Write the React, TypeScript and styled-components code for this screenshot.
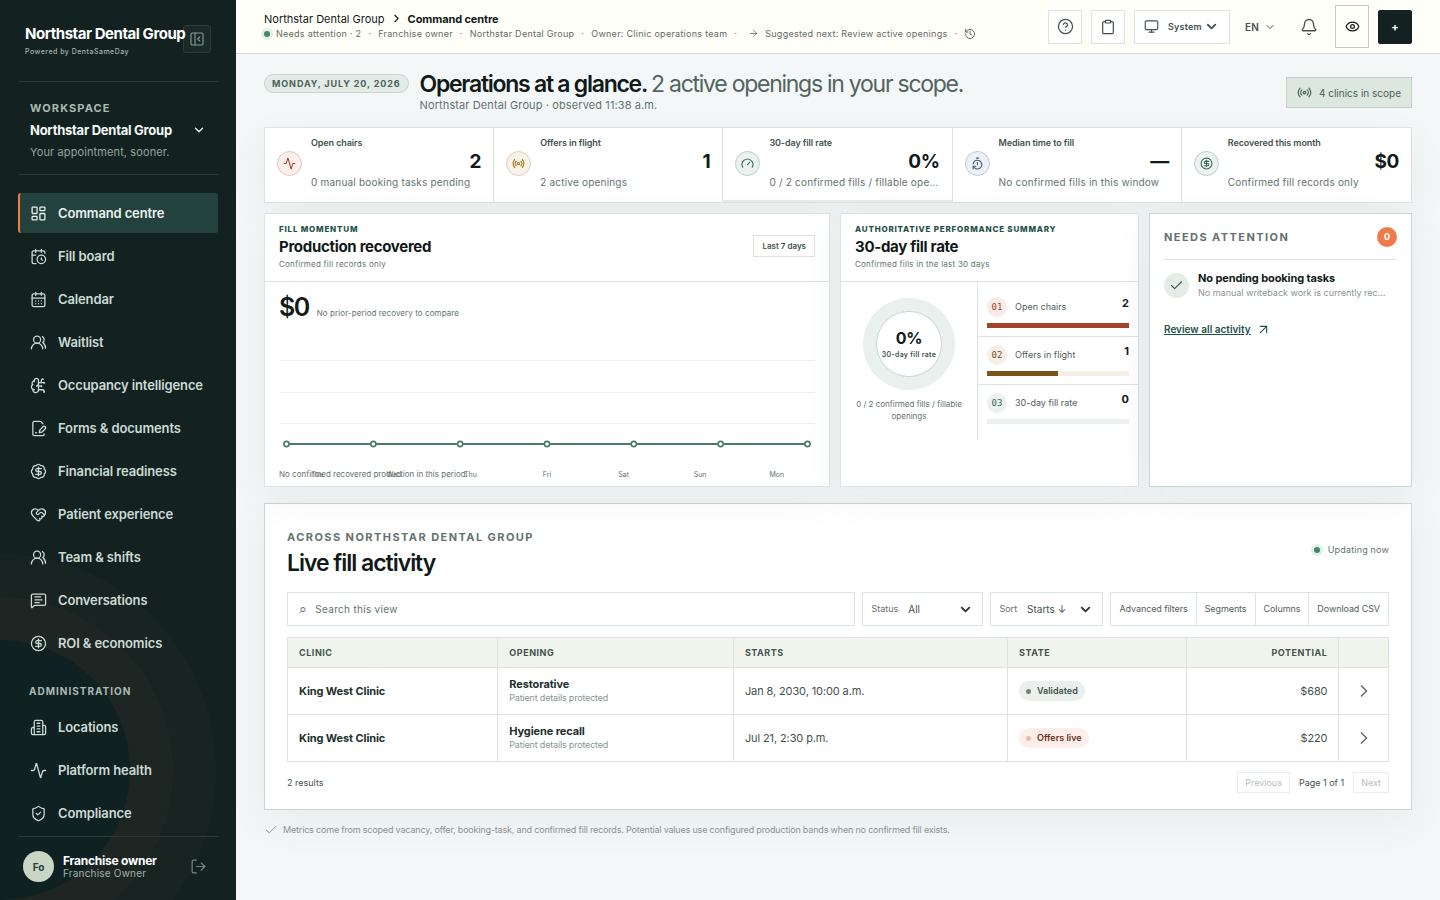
import React from 'react';
import styled, { createGlobalStyle, css } from 'styled-components';
import {
  Activity, ArrowRight, ArrowUpRight, BadgeDollarSign, Bell, BrainCircuit, CalendarClock,
  CalendarDays, Check, ChevronDown, ChevronRight, CircleDollarSign, CircleQuestionMark, Clipboard,
  Eye, FilePenLine, Gauge, HeartHandshake, History, LayoutDashboard, LogOut, MessageSquareText,
  Monitor, PanelLeftClose, Radio, ShieldCheck, TimerReset, UsersRound,
} from 'lucide-react';

const c = {
  ink: '#111a18',
  body: '#43524d',
  muted: '#65726e',
  faint: '#8a9491',
  green: '#24504a',
  line: '#dce3e1',
  lineStrong: '#cbd5d2',
  side: '#132221',
};

const GlobalStyle = createGlobalStyle`
  *, *::before, *::after { box-sizing: border-box; }
  body {
    margin: 0;
    font-family: Inter, "Liberation Sans", sans-serif;
    font-size: 11px;
    line-height: 16px;
    color: ${c.ink};
    background: #f3f7f8;
  }
  h1, h2, p, dl, dd, ul { margin: 0; padding: 0; }
  ul { list-style: none; }
  button, select, input { font: inherit; color: inherit; letter-spacing: inherit; margin: 0; }
  button { cursor: pointer; padding: 0; background: none; border: 0; }
  a { color: inherit; text-decoration: none; }
  svg { display: block; flex: none; }
`;

const Shell = styled.div`
  display: grid;
  grid-template-columns: 236px minmax(0, 1fr);
  min-height: 100vh;
`;

/* ---------- Sidebar ---------- */

const Sidebar = styled.aside`
  position: sticky;
  top: 0;
  height: 100vh;
  padding: 0 18px;
  display: flex;
  flex-direction: column;
  overflow: hidden;
  background: ${c.side};
  color: #cbdad4;
  isolation: isolate;

  &::before {
    content: '';
    position: absolute;
    z-index: -1;
    left: -130px;
    bottom: 0;
    width: 260px;
    height: 260px;
    border-radius: 50%;
    background: #102122;
    box-shadow: 0 0 0 43px rgba(200, 120, 100, 0.03), 0 0 0 86px rgba(200, 120, 100, 0.03);
  }
`;

const Brand = styled.div`
  display: flex;
  justify-content: space-between;
  height: 82px;
  padding: 25px 7px 0;
  border-bottom: 1px solid #2a3937;
`;

const BrandText = styled.div`
  position: relative;
  z-index: 1;
  min-width: 0;
  width: 158px;
  flex: none;
  white-space: nowrap;
`;

const BrandName = styled.div`
  font-size: 15px;
  line-height: 18px;
  font-weight: 700;
  letter-spacing: -0.03em;
  color: #fff;
`;

const BrandBy = styled.div`
  font-size: 7px;
  line-height: 18px;
  letter-spacing: 0.07em;
  font-weight: 500;
  color: #a3b2ad;
`;

const CollapseButton = styled.button`
  width: 28px;
  height: 28px;
  display: grid;
  place-items: center;
  border: 1px solid #2a3a37;
  border-radius: 3px;
  background: #1a2a28;
  color: #85968f;
`;

const Workspace = styled.button`
  display: grid;
  grid-template-columns: 1fr 14px;
  text-align: left;
  padding: 18px 12px 14px;
  border-bottom: 1px solid #2a3937;
`;

const WorkspaceLabel = styled.span`
  grid-column: 1 / -1;
  font-size: 11px;
  line-height: 16px;
  font-weight: 700;
  letter-spacing: 0.1em;
  color: #a9bab4;
`;

const WorkspaceName = styled.strong`
  font-size: 13px;
  line-height: 28px;
  font-weight: 700;
  letter-spacing: -0.02em;
  color: #f4f8f6;
`;

const WorkspaceNote = styled.span`
  grid-column: 1 / -1;
  font-size: 11px;
  line-height: 16px;
  letter-spacing: 0.01em;
  color: #93a49e;
`;

const Caret = styled.span`
  display: grid;
  place-items: center;
  color: #e6eeeb;
`;

const Nav = styled.nav`
  flex: 1;
  min-height: 0;
  overflow: hidden;
  padding-top: 18px;
  display: flex;
  flex-direction: column;
  gap: 3px;
`;

const NavItem = styled.a<{ $active?: boolean }>`
  flex: none;
  display: flex;
  align-items: center;
  gap: 11px;
  height: 40px;
  padding-left: 10px;
  border-left: 2px solid transparent;
  border-radius: 3px;
  font-size: 13px;
  font-weight: 600;
  letter-spacing: -0.01em;
  ${(p) => p.$active && css`
    background: #24423d;
    border-left-color: #ef7d4a;
    color: #e8f1ee;
  `}
`;

const NavHeading = styled.div`
  padding: 17px 11px 5px;
  font-size: 10px;
  line-height: 16px;
  font-weight: 700;
  letter-spacing: 0.1em;
  color: #a9bab4;
`;

const Account = styled.div`
  display: flex;
  align-items: center;
  gap: 9px;
  height: 64px;
  padding: 0 10px 4px 5px;
  border-top: 1px solid #2a3937;
`;

const Avatar = styled.span`
  width: 31px;
  height: 31px;
  border-radius: 50%;
  display: grid;
  place-items: center;
  background: #c9d6c5;
  color: #24423d;
  font-size: 10px;
  font-weight: 700;
`;

const AccountText = styled.div`
  flex: 1;
  font-size: 10px;
  line-height: 13px;
  letter-spacing: 0.02em;
  color: #a3b2ad;
  strong { display: block; font-size: 12px; letter-spacing: -0.02em; font-weight: 700; color: #fff; }
`;

const SignOut = styled.button`
  width: 20px;
  height: 20px;
  display: grid;
  place-items: center;
  color: #73847e;
`;

/* ---------- Top bar ---------- */

const Page = styled.div`
  min-width: 0;
`;

const TopBar = styled.header`
  display: flex;
  justify-content: space-between;
  align-items: center;
  height: 54px;
  padding: 0 28px;
  background: #fffef9;
  border-bottom: 1px solid #d5dcda;
`;

const Crumbs = styled.nav`
  display: flex;
  align-items: center;
  gap: 5px;
  font-size: 11px;
  line-height: 14px;
  strong { font-weight: 700; letter-spacing: -0.01em; }
`;

const Context = styled.div`
  display: flex;
  align-items: center;
  gap: 7px;
  font-size: 9px;
  line-height: 16px;
  letter-spacing: 0.03em;
  color: #5f6c68;
`;

const ContextItem = styled.span<{ $inset?: boolean }>`
  display: flex;
  align-items: center;
  gap: 6px;
  padding-left: ${(p) => (p.$inset ? 4 : 0)}px;
`;

const Dot = styled.i<{ $size: number; $color: string; $halo?: string }>`
  flex: none;
  width: ${(p) => p.$size}px;
  height: ${(p) => p.$size}px;
  border-radius: 50%;
  background: ${(p) => p.$color};
  ${(p) => p.$halo && `box-shadow: 0 0 0 3px ${p.$halo};`}
`;

const Tools = styled.div`
  display: flex;
  align-items: center;
  gap: 9px;
`;

const ToolButton = styled.button<{ $kind?: 'plain' | 'tall' | 'dark' }>`
  width: 34px;
  height: 34px;
  display: grid;
  place-items: center;
  border: 1px solid ${c.line};
  background: #fff;
  color: ${c.body};
  font-size: 11px;
  font-weight: 700;
  ${(p) => p.$kind === 'plain' && 'border-color: transparent; background: none;'}
  ${(p) => p.$kind === 'tall' && `height: 43px; border-color: #c3c9c7; background: none; color: ${c.ink};`}
  ${(p) => p.$kind === 'dark' && `border-color: ${c.side}; border-radius: 2px; background: ${c.side}; color: #fff;`}
`;

const ThemeField = styled.label`
  display: flex;
  align-items: center;
  gap: 9px;
  width: 96px;
  height: 34px;
  padding: 0 10px 0 9px;
  border: 1px solid ${c.line};
  background: #fff;
  font-size: 9px;
  font-weight: 600;
  letter-spacing: 0.02em;
  color: ${c.body};
`;

const LanguageField = styled(ThemeField)`
  width: 44px;
  padding: 0 6px 0 5px;
  border-color: transparent;
  background: none;
  font-size: 10px;
`;

const SelectWrap = styled.span`
  flex: 1;
  min-width: 0;
  display: grid;
  grid-template-columns: minmax(0, 1fr) auto;
  align-items: center;
  > * { grid-row: 1; }
  > svg { grid-column: 2; pointer-events: none; }
`;

const BareSelect = styled.select`
  grid-column: 1 / -1;
  width: 100%;
  appearance: none;
  border: 0;
  padding: 0;
  background: transparent;
`;

/* ---------- Hero ---------- */

const Content = styled.main`
  padding: 17px 28px 28px;
`;

const Hero = styled.div`
  display: flex;
  align-items: flex-start;
  gap: 11px;
  height: 56px;
`;

const DatePill = styled.span`
  margin-top: 3px;
  height: 19px;
  padding: 0 7px;
  border: 1px solid #c8d5cf;
  border-radius: 10px;
  background: #e2ebe6;
  color: #4c6159;
  font-size: 9px;
  line-height: 17px;
  font-weight: 700;
  letter-spacing: 0.1em;
  white-space: nowrap;
`;

const HeroText = styled.div`
  flex: 1;
  min-width: 0;
  letter-spacing: 0.01em;
  color: ${c.muted};
`;

const Title = styled.h1`
  font-size: 23px;
  line-height: 26px;
  font-weight: 600;
  letter-spacing: -0.055em;
  color: ${c.ink};
  span { font-weight: 400; color: #52645e; }
`;

const ScopeBadge = styled.span`
  margin-top: 6px;
  display: flex;
  align-items: center;
  gap: 7px;
  height: 31px;
  padding: 0 10px;
  border: 1px solid #c3d1c9;
  background: #dce7df;
  color: #4c6159;
  font-size: 10px;
`;

/* ---------- KPI strip ---------- */

const cardShadow = '0 12px 40px rgba(24, 48, 42, 0.05)';

const Metrics = styled.section`
  display: grid;
  grid-template-columns: repeat(5, minmax(0, 1fr));
  height: 76px;
  border: 1px solid ${c.line};
  background: #fff;
  box-shadow: ${cardShadow};
`;

const Metric = styled.article<{ $marked?: boolean }>`
  display: grid;
  grid-template-columns: 25px minmax(0, 1fr);
  column-gap: 9px;
  align-items: center;
  padding: 6px 12px 9px;
  &:not(:last-child) { border-right: 1px solid ${c.line}; }
  ${(p) => p.$marked && 'box-shadow: inset 0 -2px #e6ebea;'}
`;

const MetricIcon = styled.span<{ $tint: string; $ring: string; $color: string }>`
  margin-top: 17px;
  align-self: start;
  width: 25px;
  height: 25px;
  display: grid;
  place-items: center;
  border-radius: 50%;
  border: 1px solid ${(p) => p.$ring};
  background: ${(p) => p.$tint};
  color: ${(p) => p.$color};
`;

const MetricBody = styled.div`
  display: flex;
  flex-direction: column;
  align-self: start;
`;

const MetricLabel = styled.span`
  font-size: 9px;
  line-height: 18px;
  font-weight: 600;
  letter-spacing: -0.01em;
  color: ${c.body};
`;

const MetricValue = styled.strong`
  align-self: flex-end;
  font-size: 19px;
  line-height: 20px;
  font-weight: 700;
  letter-spacing: -0.02em;
  color: ${c.ink};
`;

const MetricNote = styled.span`
  font-size: 10px;
  line-height: 20px;
  letter-spacing: 0.02em;
  color: ${c.muted};
  white-space: nowrap;
  overflow: hidden;
  text-overflow: ellipsis;
`;

/* ---------- Panels ---------- */

const Panels = styled.div`
  display: grid;
  grid-template-columns: 566fr 299fr 263fr;
  gap: 10px;
  margin: 10px 0 16px;
`;

const Panel = styled.section<{ $strong?: boolean }>`
  min-width: 0;
  min-height: 274px;
  background: #fff;
  border: 1px solid ${(p) => (p.$strong ? c.lineStrong : c.line)};
  box-shadow: ${cardShadow};
`;

const PanelHead = styled.header`
  display: flex;
  justify-content: space-between;
  align-items: center;
  height: 68px;
  padding: 0 14px 3px;
  border-bottom: 1px solid ${c.line};
`;

const PanelEyebrow = styled.p`
  font-size: 8px;
  line-height: 16px;
  font-weight: 800;
  letter-spacing: 0.1em;
  color: ${c.green};
`;

const PanelTitle = styled.h2`
  font-size: 15px;
  line-height: 20px;
  font-weight: 700;
  letter-spacing: -0.02em;
`;

const SmallNote = styled.p`
  font-size: 8px;
  line-height: 14px;
  letter-spacing: 0.03em;
  color: ${c.muted};
`;

const RangeTag = styled.span`
  height: 22px;
  padding: 0 8px;
  border: 1px solid ${c.line};
  font-size: 8px;
  line-height: 20px;
  font-weight: 600;
  color: ${c.body};
`;

const TrendBody = styled.div`
  position: relative;
  padding: 10px 14px 0;
`;

const TrendTotal = styled.div`
  display: flex;
  align-items: baseline;
  gap: 8px;
  strong { font-size: 25px; line-height: 30px; font-weight: 600; letter-spacing: -0.06em; }
  p { letter-spacing: 0.01em; }
`;

const Chart = styled.svg`
  width: 100%;
  height: 141px;
  margin-top: 6px;
`;

const Days = styled.div`
  display: grid;
  grid-template-columns: repeat(7, 1fr);
  text-align: center;
  font-size: 7px;
  line-height: 12px;
  color: ${c.muted};
`;

const EmptyNote = styled(SmallNote)`
  position: absolute;
  left: 14px;
  bottom: 0;
  letter-spacing: 0;
`;

const RateBody = styled.div`
  display: grid;
  grid-template-columns: 137px minmax(0, 1fr);
  min-height: 158px;
`;

const Donut = styled.div`
  display: flex;
  flex-direction: column;
  align-items: center;
  gap: 8px;
  padding: 16px 14px 0;
  border-right: 1px solid ${c.line};
  text-align: center;
  font-size: 8px;
  line-height: 12px;
  color: ${c.muted};
`;

const Ring = styled.div`
  width: 92px;
  height: 92px;
  padding: 13px;
  border-radius: 50%;
  background: #e9f0ed;
`;

const RingCore = styled.div`
  height: 66px;
  display: flex;
  flex-direction: column;
  align-items: center;
  justify-content: center;
  padding-top: 2px;
  border: 1px solid ${c.lineStrong};
  border-radius: 50%;
  background: #fff;
  white-space: nowrap;
  font-size: 7px;
  line-height: 14px;
  letter-spacing: 0.04em;
  font-weight: 600;
  color: ${c.body};
  strong { font-size: 16px; line-height: 20px; letter-spacing: -0.02em; font-weight: 700; color: ${c.ink}; }
`;

const Ranks = styled.ul`
  padding-top: 6px;
`;

const Rank = styled.li`
  display: grid;
  grid-template-columns: 20px 1fr auto;
  align-content: start;
  align-items: center;
  column-gap: 8px;
  height: 48px;
  padding: 9px 9px 0;
  font-size: 9px;
  color: #52605c;
  & + & { border-top: 1px solid ${c.line}; padding-top: 8px; }
  strong { align-self: start; font-size: 11px; line-height: 13px; font-weight: 700; color: ${c.ink}; }
`;

const RankNumber = styled.span<{ $tint: string; $color: string }>`
  width: 20px;
  height: 20px;
  border-radius: 50%;
  background: ${(p) => p.$tint};
  color: ${(p) => p.$color};
  text-align: center;
  font: 9px/20px "DejaVu Sans Mono", monospace;
`;

const Bar = styled.div<{ $tint: string }>`
  grid-column: 1 / -1;
  height: 5px;
  margin-top: 6px;
  background: ${(p) => p.$tint};
`;

const BarFill = styled.div<{ $color: string }>`
  height: 100%;
  background: ${(p) => p.$color};
`;

const AttentionPanel = styled(Panel)`
  padding: 0 14px;
`;

const AttentionHead = styled.header`
  display: flex;
  justify-content: space-between;
  align-items: center;
  height: 46px;
  border-bottom: 1px solid ${c.line};
`;

const Kicker = styled.p`
  font-size: 11px;
  line-height: 18px;
  font-weight: 700;
  letter-spacing: 0.13em;
  color: ${c.muted};
`;

const Count = styled.span`
  width: 20px;
  height: 20px;
  border-radius: 50%;
  background: #ee7c4b;
  color: #fff;
  text-align: center;
  font-size: 9px;
  line-height: 20px;
  font-weight: 700;
`;

const Task = styled.div`
  display: grid;
  grid-template-columns: 25px minmax(0, 1fr);
  gap: 9px;
  align-items: center;
  margin: 10px 0 21px;
`;

const TaskIcon = styled.span`
  width: 25px;
  height: 25px;
  display: grid;
  place-items: center;
  border-radius: 50%;
  background: #e4ece7;
  color: #46594f;
`;

const TaskText = styled.div`
  font-size: 9px;
  line-height: 14px;
  color: ${c.faint};
  strong { display: block; font-size: 11px; line-height: 16px; letter-spacing: -0.01em; font-weight: 700; color: ${c.ink}; }
  span { display: block; white-space: nowrap; overflow: hidden; text-overflow: ellipsis; padding-right: 10px; }
`;

const TextLink = styled.a`
  display: inline-flex;
  align-items: center;
  gap: 5px;
  font-size: 10px;
  line-height: 14px;
  font-weight: 600;
  color: ${c.green};
  span { text-decoration: underline; text-underline-offset: 1px; }
`;

/* ---------- Activity ---------- */

const ActivityPanel = styled(Panel)`
  padding: 24px 22px 16px;
`;

const ActivityHead = styled.header`
  display: flex;
  align-items: center;
  justify-content: space-between;
  margin-bottom: 12px;
`;

const ActivityTitle = styled.h2`
  font-size: 23px;
  line-height: 34px;
  font-weight: 600;
  letter-spacing: -0.045em;
`;

const Updating = styled.span`
  display: flex;
  align-items: center;
  gap: 8px;
  padding-bottom: 8px;
  font-size: 9px;
  letter-spacing: 0.02em;
  color: ${c.muted};
`;

const Toolbar = styled.div`
  display: flex;
  gap: 7px;
  height: 34px;
  margin-bottom: 11px;
`;

const SearchField = styled.label`
  flex: 1;
  display: flex;
  align-items: center;
  gap: 8px;
  padding: 0 11px;
  border: 1px solid ${c.line};
  color: ${c.muted};
  font-size: 10px;
  letter-spacing: 0.03em;
  input {
    flex: 1;
    min-width: 0;
    border: 0;
    padding: 0;
    background: none;
    outline: 0;
  }
  input::placeholder { color: ${c.muted}; opacity: 1; }
`;

const SearchGlyph = styled.span`
  font-size: 14px;
`;

const FilterField = styled.label<{ $width: number }>`
  width: ${(p) => p.$width}px;
  display: flex;
  align-items: center;
  gap: 10px;
  padding: 0 9px 0 8px;
  border: 1px solid ${c.line};
  font-size: 9px;
  color: ${c.muted};
  select { font-size: 10px; color: ${c.body}; }
  svg { color: #2c3a36; }
`;

const ButtonGroup = styled.div`
  display: flex;
  border: 1px solid ${c.line};
`;

const GroupButton = styled.button`
  padding: 0 8px;
  font-size: 9px;
  letter-spacing: -0.01em;
  color: #52605c;
  & + & { border-left: 1px solid ${c.line}; }
`;

const Table = styled.table`
  width: 100%;
  table-layout: fixed;
  border-collapse: collapse;
  letter-spacing: -0.01em;
  th, td { border: 1px solid ${c.line}; padding: 0 11px; text-align: left; }
  th { height: 30px; background: #f1f4ed; font-size: 9px; font-weight: 700; letter-spacing: 0.06em; color: ${c.body}; }
  td { height: 47px; color: ${c.body}; }
  strong { display: block; line-height: 14px; font-weight: 700; letter-spacing: -0.01em; color: #22302c; }
  small { display: block; font-size: 9px; line-height: 14px; letter-spacing: -0.02em; color: ${c.faint}; }
`;

const Column = styled.col<{ $share: number }>`
  width: ${(p) => p.$share}%;
`;

const EndHeader = styled.th`
  && { text-align: right; }
`;

const EndCell = styled.td`
  && { text-align: right; }
`;

const State = styled.span<{ $live?: boolean }>`
  display: inline-flex;
  align-items: center;
  gap: 6px;
  height: 20px;
  padding: 0 7px;
  border-radius: 10px;
  font-size: 9px;
  font-weight: 600;
  letter-spacing: 0;
  background: ${(p) => (p.$live ? '#fdeee9' : '#ebf0ec')};
  color: ${(p) => (p.$live ? '#6b2f22' : '#43524d')};
`;

const RowButton = styled.button`
  display: grid;
  place-items: center;
  width: 100%;
  height: 30px;
  color: ${c.muted};
`;

const TableFoot = styled.footer`
  display: flex;
  align-items: center;
  justify-content: space-between;
  margin-top: 10px;
  font-size: 9px;
  color: ${c.body};
`;

const Pager = styled.div`
  display: flex;
  align-items: center;
  gap: 9px;
`;

const PageButton = styled.button`
  height: 21px;
  padding: 0 7px;
  border: 1px solid #e9edec;
  color: #b6bdbb;
`;

const Footnote = styled.p`
  display: flex;
  align-items: center;
  gap: 5px;
  margin-top: 12px;
  font-size: 9px;
  letter-spacing: -0.02em;
  color: ${c.faint};
`;

/* ---------- Data ---------- */

const BuildingIcon = ({ size = 18, strokeWidth = 1.7 }: { size?: number; strokeWidth?: number }) => (
  <svg width={size} height={size} viewBox="0 0 24 24" fill="none" stroke="currentColor"
    strokeWidth={strokeWidth} strokeLinecap="round" strokeLinejoin="round" aria-hidden="true">
    <path d="M6 22V4a2 2 0 0 1 2-2h8a2 2 0 0 1 2 2v18Z" />
    <path d="M6 12H4a2 2 0 0 0-2 2v6a2 2 0 0 0 2 2h2" />
    <path d="M18 9h2a2 2 0 0 1 2 2v9a2 2 0 0 1-2 2h-2" />
    <path d="M10 6h4" />
    <path d="M10 10h4" />
    <path d="M10 14h4" />
    <path d="M10 18h4" />
  </svg>
);

const mainNav = [
  { label: 'Command centre', Icon: LayoutDashboard },
  { label: 'Fill board', Icon: CalendarClock },
  { label: 'Calendar', Icon: CalendarDays },
  { label: 'Waitlist', Icon: UsersRound },
  { label: 'Occupancy intelligence', Icon: BrainCircuit },
  { label: 'Forms & documents', Icon: FilePenLine },
  { label: 'Financial readiness', Icon: BadgeDollarSign },
  { label: 'Patient experience', Icon: HeartHandshake },
  { label: 'Team & shifts', Icon: UsersRound },
  { label: 'Conversations', Icon: MessageSquareText },
  { label: 'ROI & economics', Icon: CircleDollarSign },
];

const adminNav = [
  { label: 'Locations', Icon: BuildingIcon },
  { label: 'Platform health', Icon: Activity },
  { label: 'Compliance', Icon: ShieldCheck },
];

const metrics = [
  { label: 'Open chairs', value: '2', note: '0 manual booking tasks pending', Icon: Activity, tint: '#fbefeb', ring: '#e2c3ba', color: '#b2452c' },
  { label: 'Offers in flight', value: '1', note: '2 active openings', Icon: Radio, tint: '#f8f2e8', ring: '#dccfb8', color: '#a87420' },
  { label: '30-day fill rate', value: '0%', note: '0 / 2 confirmed fills / fillable openings', Icon: Gauge, tint: '#ebf2ef', ring: '#bccfc7', color: '#3c6a5c' },
  { label: 'Median time to fill', value: '—', note: 'No confirmed fills in this window', Icon: TimerReset, tint: '#edf1f6', ring: '#c0cad6', color: '#41597a' },
  { label: 'Recovered this month', value: '$0', note: 'Confirmed fill records only', Icon: CircleDollarSign, tint: '#ebf2ef', ring: '#bccfc7', color: '#3c6a5c' },
];

const days = ['Tue', 'Wed', 'Thu', 'Fri', 'Sat', 'Sun', 'Mon'];

const ranks = [
  { no: '01', label: 'Open chairs', value: 2, share: 100, tint: '#f8ebe7', color: '#a0452c' },
  { no: '02', label: 'Offers in flight', value: 1, share: 50, tint: '#f4efe7', color: '#78531a' },
  { no: '03', label: '30-day fill rate', value: 0, share: 0, tint: '#ecf0ee', color: '#3c6a5c' },
];

const openings = [
  { clinic: 'King West Clinic', opening: 'Restorative', starts: 'Jan 8, 2030, 10:00 a.m.', state: 'Validated', live: false, potential: '$680' },
  { clinic: 'King West Clinic', opening: 'Hygiene recall', starts: 'Jul 21, 2:30 p.m.', state: 'Offers live', live: true, potential: '$220' },
];

const columnShares = [19.1, 21.4, 24.9, 16.3, 13.8, 4.5];

const pointX = (i: number) => `${1.4 + i * 16.2}%`;

/* ---------- Sections ---------- */

const SideNavigation = () => (
  <Sidebar>
    <Brand>
      <BrandText>
        <BrandName>Northstar Dental Group</BrandName>
        <BrandBy>Powered by DentaSameDay</BrandBy>
      </BrandText>
      <CollapseButton aria-label="Collapse sidebar"><PanelLeftClose size={16} strokeWidth={1.7} /></CollapseButton>
    </Brand>
    <Workspace>
      <WorkspaceLabel>WORKSPACE</WorkspaceLabel>
      <WorkspaceName>Northstar Dental Group</WorkspaceName>
      <Caret><ChevronDown size={14} strokeWidth={2.4} /></Caret>
      <WorkspaceNote>Your appointment, sooner.</WorkspaceNote>
    </Workspace>
    <Nav aria-label="Main">
      {mainNav.map(({ label, Icon }, i) => (
        <NavItem key={label} href="#" $active={i === 0}>
          <Icon size={17} strokeWidth={1.8} />{label}
        </NavItem>
      ))}
      <NavHeading>ADMINISTRATION</NavHeading>
      {adminNav.map(({ label, Icon }) => (
        <NavItem key={label} href="#"><Icon size={17} strokeWidth={1.8} />{label}</NavItem>
      ))}
    </Nav>
    <Account>
      <Avatar>Fo</Avatar>
      <AccountText><strong>Franchise owner</strong>Franchise Owner</AccountText>
      <SignOut aria-label="Sign out"><LogOut size={17} strokeWidth={1.7} /></SignOut>
    </Account>
  </Sidebar>
);

const Header = () => (
  <TopBar>
    <div>
      <Crumbs aria-label="Breadcrumb">
        <a href="#">Northstar Dental Group</a>
        <ChevronRight size={13} strokeWidth={2} />
        <strong>Command centre</strong>
      </Crumbs>
      <Context>
        <ContextItem><Dot $size={6} $color="#3f8a68" $halo="#e4efe6" />Needs attention · 2</ContextItem>
        <span>·</span>
        <span>Franchise owner</span>
        <span>·</span>
        <span>Northstar Dental Group</span>
        <span>·</span>
        <span>Owner: Clinic operations team</span>
        <span>·</span>
        <ContextItem $inset><ArrowRight size={11} strokeWidth={1.8} />Suggested next: Review active openings</ContextItem>
        <span>·</span>
        <History size={12} strokeWidth={2} />
      </Context>
    </div>
    <Tools>
      <ToolButton aria-label="Help"><CircleQuestionMark size={17} strokeWidth={1.8} /></ToolButton>
      <ToolButton aria-label="Tasks"><Clipboard size={16} strokeWidth={1.8} /></ToolButton>
      <ThemeField>
        <Monitor size={15} strokeWidth={1.8} />
        <SelectWrap>
          <BareSelect aria-label="Theme" defaultValue="System"><option>System</option></BareSelect>
          <ChevronDown size={15} strokeWidth={3} />
        </SelectWrap>
      </ThemeField>
      <LanguageField>
        <SelectWrap>
          <BareSelect aria-label="Language" defaultValue="EN"><option>EN</option></BareSelect>
          <ChevronDown size={12} strokeWidth={2} />
        </SelectWrap>
      </LanguageField>
      <ToolButton $kind="plain" aria-label="Notifications"><Bell size={18} strokeWidth={1.8} /></ToolButton>
      <ToolButton $kind="tall" aria-label="Preview"><Eye size={15} strokeWidth={2} /></ToolButton>
      <ToolButton $kind="dark" aria-label="Create">+</ToolButton>
    </Tools>
  </TopBar>
);

const TrendPanel = () => (
  <Panel>
    <PanelHead>
      <div>
        <PanelEyebrow>FILL MOMENTUM</PanelEyebrow>
        <PanelTitle>Production recovered</PanelTitle>
        <SmallNote>Confirmed fill records only</SmallNote>
      </div>
      <RangeTag>Last 7 days</RangeTag>
    </PanelHead>
    <TrendBody>
      <TrendTotal><strong>$0</strong><SmallNote>No prior-period recovery to compare</SmallNote></TrendTotal>
      <Chart role="img" aria-label="Recovered production by day">
        {[32, 64, 95].map((y) => (
          <line key={y} x1="0" x2="100%" y1={y + 0.5} y2={y + 0.5} stroke="#edf0ef" />
        ))}
        <line x1={pointX(0)} x2={pointX(6)} y1="116" y2="116" stroke="#4a7a68" strokeWidth="2" />
        {days.map((d, i) => (
          <circle key={d} cx={pointX(i)} cy="116" r="2.6" fill="#fff" stroke="#4a7a68" strokeWidth="1.6" />
        ))}
      </Chart>
      <Days>{days.map((d) => <span key={d}>{d}</span>)}</Days>
      <EmptyNote>No confirmed recovered production in this period.</EmptyNote>
    </TrendBody>
  </Panel>
);

const RatePanel = () => (
  <Panel>
    <PanelHead>
      <div>
        <PanelEyebrow>AUTHORITATIVE PERFORMANCE SUMMARY</PanelEyebrow>
        <PanelTitle>30-day fill rate</PanelTitle>
        <SmallNote>Confirmed fills in the last 30 days</SmallNote>
      </div>
    </PanelHead>
    <RateBody>
      <Donut>
        <Ring><RingCore><strong>0%</strong>30-day fill rate</RingCore></Ring>
        <p>0 / 2 confirmed fills / fillable openings</p>
      </Donut>
      <Ranks>
        {ranks.map((r) => (
          <Rank key={r.no}>
            <RankNumber $tint={r.tint} $color={r.color}>{r.no}</RankNumber>
            <span>{r.label}</span>
            <strong>{r.value}</strong>
            <Bar $tint={r.tint}><BarFill $color={r.color} style={{ width: `${r.share}%` }} /></Bar>
          </Rank>
        ))}
      </Ranks>
    </RateBody>
  </Panel>
);

const NeedsAttention = () => (
  <AttentionPanel $strong>
    <AttentionHead><Kicker>NEEDS ATTENTION</Kicker><Count>0</Count></AttentionHead>
    <Task>
      <TaskIcon><Check size={15} strokeWidth={1.8} /></TaskIcon>
      <TaskText>
        <strong>No pending booking tasks</strong>
        <span>No manual writeback work is currently recorded.</span>
      </TaskText>
    </Task>
    <TextLink href="#"><span>Review all activity</span><ArrowUpRight size={15} strokeWidth={1.8} /></TextLink>
  </AttentionPanel>
);

const LiveActivity = () => (
  <ActivityPanel $strong>
    <ActivityHead>
      <div>
        <Kicker>ACROSS NORTHSTAR DENTAL GROUP</Kicker>
        <ActivityTitle>Live fill activity</ActivityTitle>
      </div>
      <Updating><Dot $size={6} $color="#3f8a68" $halo="#e4efe6" />Updating now</Updating>
    </ActivityHead>
    <Toolbar>
      <SearchField>
        <SearchGlyph aria-hidden="true">⌕</SearchGlyph>
        <input type="search" aria-label="Search this view" placeholder="Search this view" />
      </SearchField>
      <FilterField $width={121}>
        Status
        <SelectWrap>
          <BareSelect defaultValue="All"><option>All</option></BareSelect>
          <ChevronDown size={15} strokeWidth={3} />
        </SelectWrap>
      </FilterField>
      <FilterField $width={113}>
        Sort
        <SelectWrap>
          <BareSelect defaultValue="Starts ↓"><option>Starts ↓</option></BareSelect>
          <ChevronDown size={15} strokeWidth={3} />
        </SelectWrap>
      </FilterField>
      <ButtonGroup>
        <GroupButton>Advanced filters</GroupButton>
        <GroupButton>Segments</GroupButton>
        <GroupButton>Columns</GroupButton>
        <GroupButton>Download CSV</GroupButton>
      </ButtonGroup>
    </Toolbar>
    <Table>
      <colgroup>{columnShares.map((s) => <Column key={s} $share={s} />)}</colgroup>
      <thead>
        <tr>
          <th>CLINIC</th><th>OPENING</th><th>STARTS</th><th>STATE</th>
          <EndHeader>POTENTIAL</EndHeader><th aria-label="Open" />
        </tr>
      </thead>
      <tbody>
        {openings.map((o) => (
          <tr key={o.opening}>
            <td><strong>{o.clinic}</strong></td>
            <td><strong>{o.opening}</strong><small>Patient details protected</small></td>
            <td>{o.starts}</td>
            <td>
              <State $live={o.live}>
                <Dot $size={5} $color={o.live ? '#f3b9a8' : '#75827d'} />{o.state}
              </State>
            </td>
            <EndCell>{o.potential}</EndCell>
            <td><RowButton aria-label={`Open ${o.opening}`}><ChevronRight size={20} strokeWidth={2} /></RowButton></td>
          </tr>
        ))}
      </tbody>
    </Table>
    <TableFoot>
      <span>2 results</span>
      <Pager>
        <PageButton disabled>Previous</PageButton>
        <span>Page 1 of 1</span>
        <PageButton disabled>Next</PageButton>
      </Pager>
    </TableFoot>
  </ActivityPanel>
);

export default function App() {
  return (
    <>
      <GlobalStyle />
      <Shell>
        <SideNavigation />
        <Page>
          <Header />
          <Content>
            <Hero>
              <DatePill>MONDAY, JULY 20, 2026</DatePill>
              <HeroText>
                <Title>Operations at a glance. <span>2 active openings in your scope.</span></Title>
                <p>Northstar Dental Group · observed 11:38 a.m.</p>
              </HeroText>
              <ScopeBadge><Radio size={15} strokeWidth={2} />4 clinics in scope</ScopeBadge>
            </Hero>
            <Metrics>
              {metrics.map(({ Icon, ...m }, i) => (
                <Metric key={m.label} $marked={i === 2}>
                  <MetricIcon $tint={m.tint} $ring={m.ring} $color={m.color}><Icon size={13} strokeWidth={2} /></MetricIcon>
                  <MetricBody>
                    <MetricLabel>{m.label}</MetricLabel>
                    <MetricValue>{m.value}</MetricValue>
                    <MetricNote>{m.note}</MetricNote>
                  </MetricBody>
                </Metric>
              ))}
            </Metrics>
            <Panels>
              <TrendPanel />
              <RatePanel />
              <NeedsAttention />
            </Panels>
            <LiveActivity />
            <Footnote>
              <Check size={14} strokeWidth={1.6} />
              Metrics come from scoped vacancy, offer, booking-task, and confirmed fill records. Potential values use configured production bands when no confirmed fill exists.
            </Footnote>
          </Content>
        </Page>
      </Shell>
    </>
  );
}
